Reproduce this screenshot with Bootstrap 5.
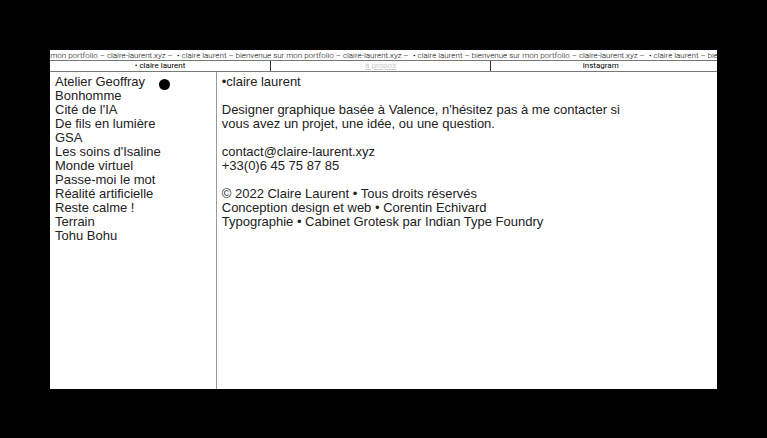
<!DOCTYPE html>
<html lang="fr">
<head>
<meta charset="utf-8">
<meta name="viewport" content="width=device-width, initial-scale=1">
<title>claire laurent</title>
<link href="https://cdn.jsdelivr.net/npm/bootstrap@5.3.0/dist/css/bootstrap.min.css" rel="stylesheet">
<style>
  body { background: #000; color: #222; font-family: "Liberation Sans", Arial, sans-serif; font-size: 13px; line-height: 14px; padding: 50px 50px 49px; }
  a, a:hover { color: inherit; text-decoration: none; }
  .ticker, .top-links { color: #000; font-family: Roboto, "Liberation Sans", sans-serif; font-weight: 300; font-size: 8px; line-height: 10px; border-bottom: 1px solid #777; }
  .ticker { line-height: 8px; padding-top: 2px; }
  .ticker-track { margin-left: -109px; }
  .ticker-track span { flex: 0 0 236px; }
  .top-links { font-weight: 400; }
  .top-links li { width: 33%; text-align: center; }
  .top-links li + li { border-left: 1px solid #333; }
  .top-links .current { color: #ccc; text-decoration: underline; }
  .projects { border-right: 1px solid #999; padding: 3px 5px; }
  .about { padding: 3px 5px; }
  .about p { max-width: 410px; margin-bottom: 14px; }
  .cursor-dot { width: 11px; height: 11px; background: #000; left: 109px; top: 7px; }
</style>
<script src="https://cdn.jsdelivr.net/npm/bootstrap@5.3.0/dist/js/bootstrap.bundle.min.js" defer></script>
</head>
<body class="min-vh-100 d-flex flex-column">
  <div class="bg-white flex-grow-1 d-flex flex-column">
    <header>
      <div class="ticker overflow-hidden">
        <div class="ticker-track d-flex text-nowrap">
          <span>• claire laurent – bienvenue sur mon portfolio – claire-laurent.xyz –</span>
          <span>• claire laurent – bienvenue sur mon portfolio – claire-laurent.xyz –</span>
          <span>• claire laurent – bienvenue sur mon portfolio – claire-laurent.xyz –</span>
          <span>• claire laurent – bienvenue sur mon portfolio – claire-laurent.xyz –</span>
        </div>
      </div>
      <nav>
        <ul class="top-links list-unstyled d-flex mb-0">
          <li><a href="#accueil">• claire laurent</a></li>
          <li><a class="current" href="#apropos" aria-current="page">à propos</a></li>
          <li><a href="#instagram">instagram</a></li>
        </ul>
      </nav>
    </header>
    <div class="row g-0 flex-grow-1">
      <nav class="projects col-3 position-relative">
        <ul class="list-unstyled mb-0">
          <li><a href="#p1">Atelier Geoffray</a></li>
          <li><a href="#p2">Bonhomme</a></li>
          <li><a href="#p3">Cité de l'IA</a></li>
          <li><a href="#p4">De fils en lumière</a></li>
          <li><a href="#p5">GSA</a></li>
          <li><a href="#p6">Les soins d'Isaline</a></li>
          <li><a href="#p7">Monde virtuel</a></li>
          <li><a href="#p8">Passe-moi le mot</a></li>
          <li><a href="#p9">Réalité artificielle</a></li>
          <li><a href="#p10">Reste calme !</a></li>
          <li><a href="#p11">Terrain</a></li>
          <li><a href="#p12">Tohu Bohu</a></li>
        </ul>
        <span class="cursor-dot position-absolute rounded-circle" aria-hidden="true"></span>
      </nav>
      <main class="about col-9" id="apropos">
        <p>•claire laurent</p>
        <p>Designer graphique basée à Valence, n'hésitez pas à me contacter si vous avez un projet, une idée, ou une question.</p>
        <p><a href="mailto:contact@claire-laurent.xyz">contact@claire-laurent.xyz</a><br><a href="tel:+33645758785">+33(0)6 45 75 87 85</a></p>
        <p class="mb-0">© 2022 Claire Laurent • Tous droits réservés<br>Conception design et web • Corentin Echivard<br>Typographie • Cabinet Grotesk par Indian Type Foundry</p>
      </main>
    </div>
  </div>
</body>
</html>
